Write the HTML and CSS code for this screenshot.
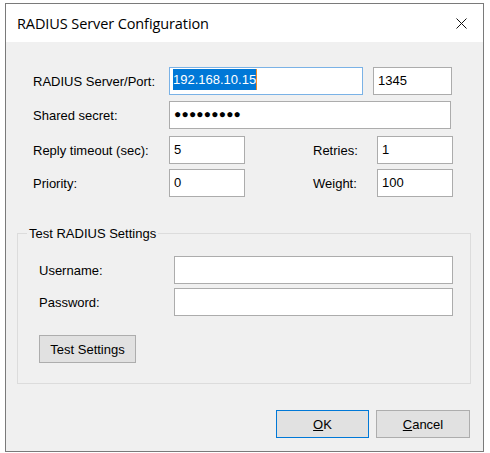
FILE: index.html
```html
<!DOCTYPE html>
<html>
<head>
<meta charset="utf-8">
<link rel="stylesheet" href="styles.css">
</head>
<body>
<div class="window">
  <div class="titlebar">
    <span class="title">RADIUS Server Configuration</span>
    <svg class="close" width="11" height="11" viewBox="0 0 11 11"><path d="M0.5 0.5 L10.5 10.5 M10.5 0.5 L0.5 10.5" stroke="#111" stroke-width="1" fill="none"/></svg>
  </div>
  <div class="content">
    <div class="top">
      <div class="row r1">
        <span class="lbl w136">RADIUS Server/Port:</span>
        <div class="tb focus w194"><span class="sel">192.168.10.15</span></div>
        <div class="tb w78 ml10">1345</div>
      </div>
      <div class="row r2">
        <span class="lbl w136">Shared secret:</span>
        <div class="tb w282 dots">●●●●●●●●●</div>
      </div>
      <div class="row r3">
        <span class="lbl w136">Reply timeout (sec):</span>
        <div class="tb w76">5</div>
        <span class="lbl w64 ml68">Retries:</span>
        <div class="tb w76">1</div>
      </div>
      <div class="row r4">
        <span class="lbl w136">Priority:</span>
        <div class="tb w76">0</div>
        <span class="lbl w64 ml68">Weight:</span>
        <div class="tb w76">100</div>
      </div>
    </div>
    <fieldset class="group">
      <legend>Test RADIUS Settings</legend>
      <div class="row">
        <span class="lbl w135">Username:</span>
        <div class="tb w279"></div>
      </div>
      <div class="row r2b">
        <span class="lbl w135">Password:</span>
        <div class="tb w279"></div>
      </div>
      <div class="btn test">Test Settings</div>
    </fieldset>
    <div class="actions">
      <div class="btn ok"><u>O</u>K</div>
      <div class="btn cancel"><u>C</u>ancel</div>
    </div>
  </div>
</div>
</body>
</html>
```
FILE: styles.css
```css
html, body { margin: 0; padding: 0; background: #fff; }
body { font-family: "Liberation Sans", Arial, sans-serif; font-size: 13px; color: #000; }

.window {
  margin: 3px 0 0 5px;
  width: 477px;
  height: 447px;
  border: 1px solid #7a7a7a;
  background: #f0f0f0;
  display: flex;
  flex-direction: column;
}
.titlebar {
  height: 38px;
  flex: none;
  background: #fff;
  display: flex;
  align-items: center;
  justify-content: space-between;
  padding: 0 16px 0 11px;
}
.title { font-family: "Open Sans", "Noto Sans", sans-serif; font-size: 14.5px; color: #000; letter-spacing: -0.1px; }
.close { display: block; margin-top: 1px; }

.content { padding: 25px 13px 0 11px; display: flex; flex-direction: column; }
.top { padding-left: 16px; }
.row { display: flex; align-items: center; height: 28px; }
.r2 { margin-top: 6px; }
.r3 { margin-top: 7px; }
.r4 { margin-top: 5px; }
.r2b { margin-top: 4px; }

.lbl { flex: none; white-space: nowrap; }
.w136 { width: 136px; }
.w135 { width: 135px; }
.w64 { width: 64px; }
.ml68 { margin-left: 68px; }
.ml10 { margin-left: 10px; }

.tb {
  box-sizing: border-box;
  height: 28px;
  background: #fff;
  border: 1px solid #acacac;
  padding: 5px 0 0 4px;
  line-height: 15px;
  flex: none;
  white-space: nowrap;
}
.w194 { width: 194px; }
.w78 { width: 79px; }
.w282 { width: 282px; }
.w76 { width: 76px; }
.w279 { width: 279px; }
.focus { border-color: #7ab2e6; padding: 4px 0 0 3px; }
.sel { background: #0078d7; color: #fff; padding: 3px 0 3px 0; border-right: 1px solid #f08a24; }
.dots { font-size: 12px; letter-spacing: 0.2px; padding-top: 5px; }

.group {
  margin: 29px 0 0 0;
  width: 454px;
  box-sizing: border-box;
  border: 1px solid #dcdcdc;
  padding: 15px 0 20px 21px;
}
.group legend { padding: 0 2px; margin-left: -12px; line-height: 15px; }

.btn {
  box-sizing: border-box;
  height: 28px;
  background: #e1e1e1;
  border: 1px solid #adadad;
  display: flex;
  align-items: center;
  justify-content: center;
}
.test { width: 97px; margin-top: 19px; }
.actions { display: flex; justify-content: flex-end; gap: 7px; margin-top: 26px; }
.ok { width: 93px; border-color: #0078d7; }
.cancel { width: 94px; }
```
